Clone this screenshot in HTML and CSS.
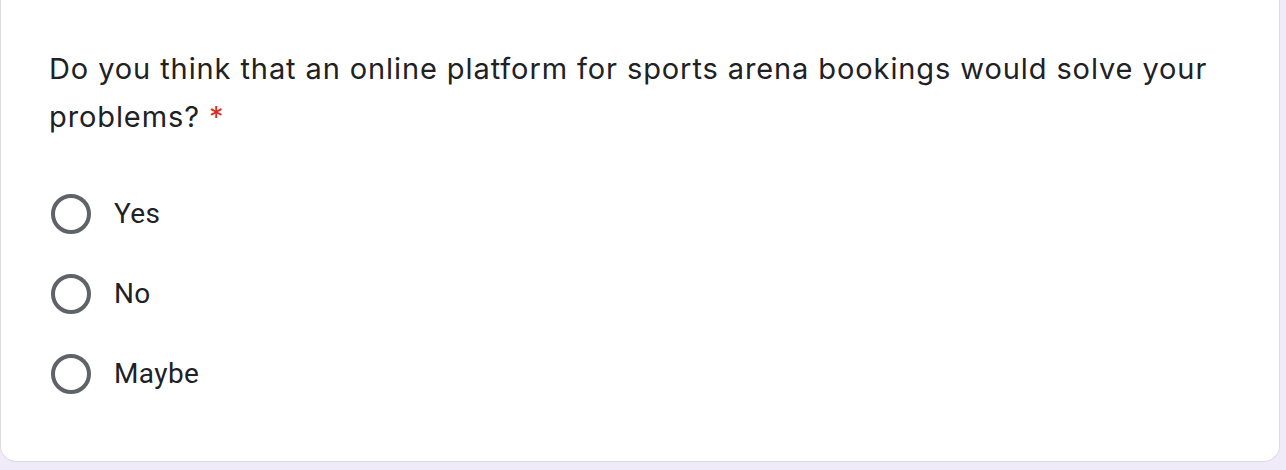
FILE: index.html
```html
<!DOCTYPE html>
<html lang="en">
<head>
<meta charset="utf-8">
<title>Question</title>
<link rel="stylesheet" href="styles.css">
</head>
<body>
  <div class="card">
    <div class="question">Do you think that an online platform for sports arena bookings would solve your problems? <span class="req">*</span></div>
    <div class="options">
      <label class="option"><span class="radio"></span><span class="label">Yes</span></label>
      <label class="option"><span class="radio"></span><span class="label">No</span></label>
      <label class="option"><span class="radio"></span><span class="label">Maybe</span></label>
    </div>
  </div>
</body>
</html>
```
FILE: styles.css
```css
html, body {
  margin: 0;
  padding: 0;
}
body {
  background: #f0ebf8;
  width: 1286px;
  height: 470px;
  overflow: hidden;
}
.card {
  box-sizing: border-box;
  width: 1280px;
  background: #ffffff;
  border: 1px solid #dadce0;
  border-top: none;
  border-radius: 0 0 16px 16px;
  padding: 45px 48px 47px 48px;
}
.question {
  font-family: Inter, Roboto, sans-serif;
  font-size: 29px;
  letter-spacing: 0.9px;
  line-height: 48px;
  color: #202124;
  max-width: 1175px;
}
.req {
  color: #d93025;
}
.options {
  display: flex;
  flex-direction: column;
  margin-top: 33px;
}
.option {
  display: flex;
  align-items: center;
  height: 80px;
}
.radio {
  box-sizing: border-box;
  width: 40px;
  height: 40px;
  border: 4px solid #5f6368;
  border-radius: 50%;
  margin-left: 2px;
  flex: none;
}
.label {
  font-family: Roboto, "Noto Sans", sans-serif;
  font-size: 28px;
  letter-spacing: 0.4px;
  line-height: 40px;
  color: #202124;
  margin-left: 23px;
}
```
